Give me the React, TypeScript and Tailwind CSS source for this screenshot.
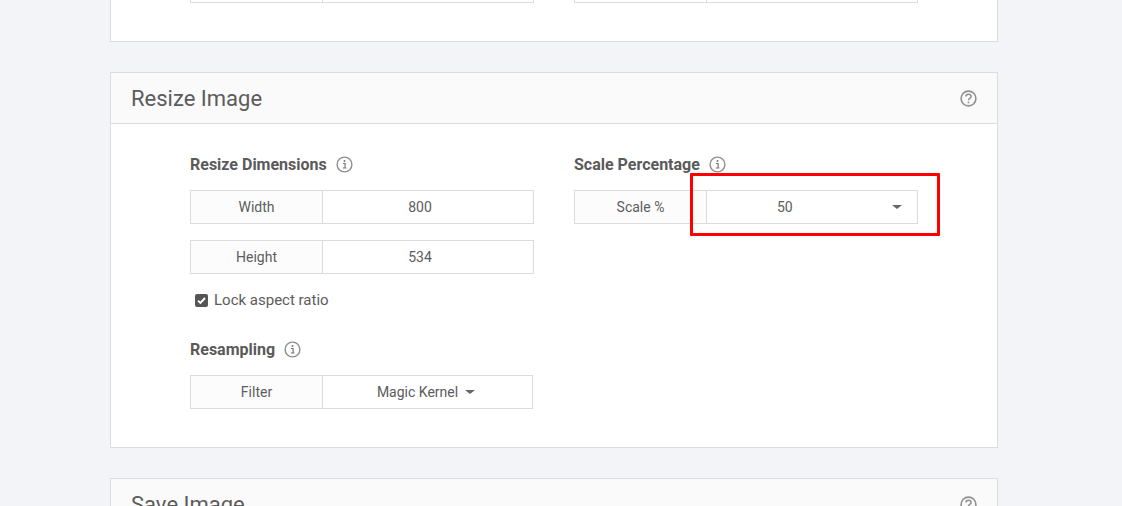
import type { ReactNode } from "react";

function InfoIcon() {
  return (
    <svg width="17" height="17" viewBox="0 0 17 17" fill="none" className="shrink-0">
      <circle cx="8.5" cy="8.5" r="7.4" stroke="#8f8f8f" strokeWidth="1.4" />
      <circle cx="8.5" cy="5" r="1" fill="#777" />
      <path d="M6.9 7.5h2.2v4.4M6.8 12h3.6" stroke="#777" strokeWidth="1.2" />
    </svg>
  );
}

function HelpIcon() {
  return (
    <svg width="17" height="17" viewBox="0 0 17 17" fill="none" className="shrink-0">
      <circle cx="8.5" cy="8.5" r="7.4" stroke="#8f8f8f" strokeWidth="1.6" />
      <path
        d="M5.9 6.6c0-1.5 1.1-2.4 2.6-2.4s2.6.9 2.6 2.2c0 1.9-2.6 1.9-2.6 3.8"
        stroke="#8f8f8f"
        strokeWidth="1.5"
      />
      <circle cx="8.5" cy="12.4" r="0.95" fill="#8f8f8f" />
    </svg>
  );
}

function Caret() {
  return <span className="h-0 w-0 border-x-[5px] border-t-[4px] border-x-transparent border-t-[#666]" />;
}

function Heading({ title }: { title: string }) {
  return (
    <div className="flex h-[20px] items-center gap-[9px]">
      <h3 className="pt-px text-[16px] font-bold text-[#5a5a5a]">{title}</h3>
      <InfoIcon />
    </div>
  );
}

function Field({ label, children, className }: { label: string; children: ReactNode; className: string }) {
  return (
    <div className={`flex h-[34px] border border-[#dcdcdc] text-[14px] text-[#5c5c5c] ${className}`}>
      <div className="flex w-[132px] shrink-0 items-center justify-center border-r border-[#dcdcdc] bg-[#fcfcfc]">
        {label}
      </div>
      <div className="flex flex-1 items-center justify-center bg-white">{children}</div>
    </div>
  );
}

export default function App() {
  return (
    <div className="relative h-[506px] w-[1122px] overflow-hidden bg-[#f3f4f8] font-['Roboto',sans-serif]">
      <div className="mx-auto flex w-[888px] -translate-x-[7px] flex-col gap-[30px]">
        {/* previous card, cut off by the top of the window */}
        <section className="h-[42px] border border-t-0 border-[#dcdcdc] bg-white">
          <div className="ml-[79px] flex gap-[40px]">
            <div className="flex h-[3px] w-[344px] border border-t-0 border-[#dcdcdc]">
              <div className="w-[132px] border-r border-[#dcdcdc]" />
            </div>
            <div className="flex h-[3px] w-[344px] border border-t-0 border-[#dcdcdc]">
              <div className="w-[132px] border-r border-[#dcdcdc]" />
            </div>
          </div>
        </section>

        <section className="h-[376px] border border-[#dcdcdc] bg-white">
          <div className="flex h-[51px] items-center justify-between border-b border-[#dcdcdc] bg-[#fafafa] pl-5 pr-[20px]">
            <h2 className="text-[22px] text-[#5c5c5c]">Resize Image</h2>
            <HelpIcon />
          </div>
          <div className="flex gap-[40px] pl-[79px] pt-[30px]">
            <div className="w-[344px]">
              <Heading title="Resize Dimensions" />
              <Field label="Width" className="mt-4">
                <span className="pr-4">800</span>
              </Field>
              <Field label="Height" className="mt-4">
                <span className="pr-4">534</span>
              </Field>
              <label className="ml-[5px] mt-4 flex h-[20px] items-center gap-[6px] text-[15px] text-[#5c5c5c]">
                <span className="flex h-[13px] w-[13px] items-center justify-center rounded-[2px] bg-[#555]">
                  <svg width="11" height="11" viewBox="0 0 11 11" fill="none">
                    <path d="M2 5.6l2.4 2.4L9 3" stroke="white" strokeWidth="1.9" />
                  </svg>
                </span>
                Lock aspect ratio
              </label>
              <div className="mt-[29px]">
                <Heading title="Resampling" />
              </div>
              <Field label="Filter" className="mt-4 w-[343px]">
                <span className="flex items-center gap-[7px] pr-[3px]">
                  Magic Kernel
                  <Caret />
                </span>
              </Field>
            </div>
            <div className="w-[344px]">
              <Heading title="Scale Percentage" />
              <Field label="Scale %" className="mt-4">
                <div className="flex w-full items-center justify-between pl-[70px] pr-[15px]">
                  50
                  <Caret />
                </div>
              </Field>
            </div>
          </div>
        </section>

        <section className="border border-[#dcdcdc] bg-[#fafafa]">
          <div className="flex h-[51px] items-center justify-between pl-5 pr-[20px]">
            <h2 className="text-[22px] text-[#5c5c5c]">Save Image</h2>
            <HelpIcon />
          </div>
        </section>
      </div>

      {/* red annotation drawn over the screenshot */}
      <div className="absolute left-[690px] top-[173px] h-[63px] w-[250px] rounded-[1px] border-[3px] border-[#ff0000]" />
    </div>
  );
}
